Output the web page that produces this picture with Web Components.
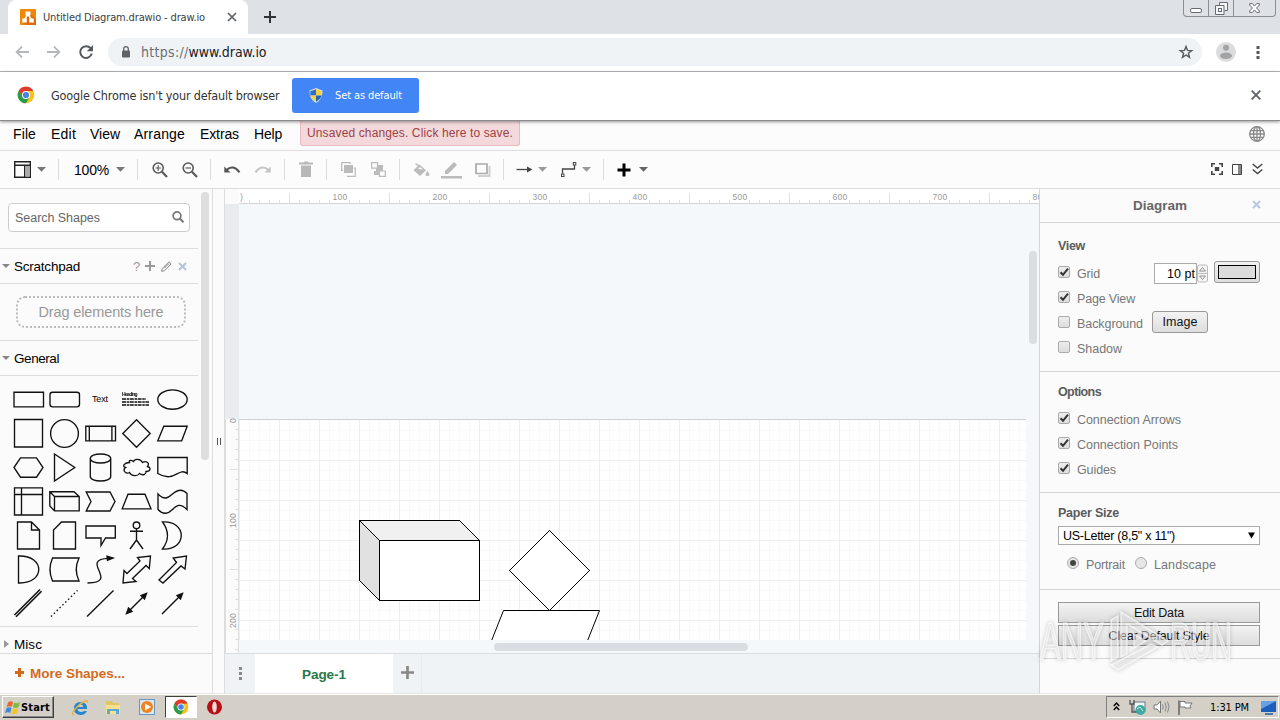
<!DOCTYPE html>
<html lang="en">
<head>
<meta charset="utf-8">
<title>Untitled Diagram.drawio - draw.io</title>
<style>
html,body{margin:0;width:1280px;height:720px;overflow:hidden;background:#fff;font-family:"Liberation Sans",Arial,sans-serif}
</style>
</head>
<body>
<desktop-screen></desktop-screen>
<script>
const define = (name, css, html, init) => customElements.define(name, class extends HTMLElement {
  connectedCallback() {
    if (this.shadowRoot) return;
    const root = this.attachShadow({ mode: 'open' });
    root.innerHTML = `<style>*{box-sizing:border-box}${css}</style>` + (typeof html === 'function' ? html(this) : html);
    if (init) init(this, root);
  }
});

/* Text whose tracking is adjusted to a given width. */
define('fit-text', ':host{display:inline-block;white-space:pre;flex:none}', '<slot></slot>', el => {
  const w = +el.getAttribute('w');
  const nat = el.getBoundingClientRect().width, n = el.textContent.length;
  if (w && nat) { el.style.letterSpacing = ((w - nat) / n).toFixed(3) + 'px'; }
});

const svg = (w, h, body, extra = '') => `<svg width="${w}" height="${h}" viewBox="0 0 ${w} ${h}" fill="none" ${extra}>${body}</svg>`;
/* Lays items [x, width, html] along a row by their gaps. */
const row = items => { let end = 0; return items.map(([x, w, h]) => { const m = x - end; end = x + w; return `<div class="i" style="margin-left:${m}px;width:${w}px">${h}</div>`; }).join(''); };
const rowCss = '.i{flex:none;display:flex;align-items:center;height:100%}svg{display:block;flex:none;overflow:visible}';
const chromeLogo = s => `<svg width="${s}" height="${s}" viewBox="-9 -9 18 18"><circle r="8.3" fill="#fbc116"/><path d="M0 0-7.2-4.15A8.3 8.3 0 0 1 7.2-4.15L0-4Z" fill="#de3b2f"/><path d="M0-4H7.2A8.3 8.3 0 0 0-7.2-4.15L-3.5 2Z" fill="#de3b2f"/><path d="M-7.2-4.15A8.3 8.3 0 0 0 0 8.3L3.6 2 0 4-3.5 2Z" fill="#2a9a4b"/><circle r="4" fill="#fff"/><circle r="3.1" fill="#4383e8"/></svg>`;

define('browser-tabs', `:host{display:flex;height:34px;background:#dee1e6;font-family:"DejaVu Sans Condensed","Noto Sans",sans-serif}
.tab{width:240px;margin-left:8px;background:#fff;border-radius:8px 8px 0 0;display:flex;align-items:center;font-size:11px;color:#3c4043}
.win{margin-left:auto;margin-right:4px;display:flex;width:93px;height:17px;border:1px solid #8b8e96;border-top:0;border-radius:0 0 4px 4px}
.win div{border-right:1px solid #8b8e96;display:flex;justify-content:center;align-items:center}.win div:last-child{border:0}` + rowCss,
`<div class="tab">${row([
 [12,16,svg(16,16,'<rect width="16" height="16" rx="1" fill="#f08705"/><path d="M8 3 16 10V16H6L3 13Z" fill="#df6c0c"/><path d="M8 5 4.500 11M8 5l3.500 6" stroke="#fff" stroke-width="1.500"/><path d="M5.500 2.500h5v4h-5zM2.200 9.500h4.600v4H2.200zM9.200 9.500h4.600v4H9.200z" fill="#fff"/>')],
 [35,163,'<fit-text w="162">Untitled Diagram.drawio - draw.io</fit-text>'],
 [220,8,svg(8,8,'<path d="M0 0 8 8M8 0 0 8" stroke="#5f6368" stroke-width="1.700"/>')]])}</div>
<div class="i" style="margin-left:16px">${svg(12,12,'<path d="M6 0V12M0 6H12" stroke="#303338" stroke-width="2"/>')}</div>
<div class="win"><div style="width:25px">${svg(12,5,'<rect x=".5" y=".5" width="11" height="4" rx="1.500" stroke="#666a75" fill="#fff"/>','style="margin-top:4px"')}</div><div style="width:25px">${svg(13,13,'<path d="M4.500 3.500v-3h8v8h-3M.5 3.500h8.500v9H.5z" stroke="#666a75" fill="#f5f6f8"/><rect x="3.500" y="6.500" width="3" height="3" stroke="#666a75"/>')}</div><div style="flex:1">${svg(11,10,'<path d="M.7.600h2.700l2.100 2.500L7.600.6h2.700v1.500L7.500 5l2.800 2.900v1.500H7.600L5.500 6.900 3.400 9.400H.7V7.900L3.500 5 .7 2.100z" stroke="#666a75" fill="#fff"/>')}</div></div>`);

define('address-bar', `:host{display:flex;height:38px;background:#fff;border-bottom:1px solid #b4b6b8;align-items:center;position:relative}
.omni{margin-left:15px;width:1094px;height:28px;border-radius:14px;background:#f0f3f5;display:flex;align-items:center;font:14px "DejaVu Sans Condensed","Noto Sans",sans-serif;color:#202124;margin-top:-2px}
.nav{display:flex;height:34px;align-items:center;padding-bottom:1px}` + rowCss,
`<div class="nav">${row([
 [15,14,svg(14,12,'<path d="M14 6H1.500M7 .7 1.600 6 7 11.300" stroke="#b5b8bb" stroke-width="1.800"/>')],
 [47,14,svg(14,12,'<path d="M0 6H12.500M7 .7 12.400 6 7 11.300" stroke="#b5b8bb" stroke-width="1.800"/>')],
 [79,14,svg(14,14,'<path d="M11.600 3.200A5.900 5.900 0 1 0 12.800 8.600" stroke="#55585c" stroke-width="2"/><path d="M14 0V6.200H7.800Z" fill="#55585c"/>')]])}</div>
<div class="omni">${row([[14,8,svg(8,12,'<path d="M1.700 5V3a2.300 2.300 0 0 1 4.600 0V5" stroke="#5f6368" stroke-width="1.300"/><rect y="4.500" width="8" height="7" rx="1" fill="#5f6368"/>')],
 [33,126,'<fit-text w="47.500" style="color:#6c7074">https://</fit-text><fit-text w="78">www.draw.io</fit-text>'],
 [1071,14,svg(14,14,'<path d="M7 1.500 8.500 5.400 12.700 5.600 9.400 8.200 10.500 12.300 7 10 3.500 12.300 4.600 8.200 1.300 5.600 5.500 5.400Z" stroke="#55585c" stroke-width="1.400"/>')]])}</div>
<div class="nav">${row([[14,20,svg(20,20,'<circle cx="10" cy="10" r="10" fill="#dcdcdc"/><circle cx="10" cy="5.800" r="3" fill="#a1a3a5"/><ellipse cx="10" cy="13.700" rx="6" ry="3.200" fill="#a1a3a5"/>')],
 [54,4,svg(4,13,'<path d="M.5 0h3v3h-3zM.5 5h3v3h-3zM.5 10h3v3h-3z" fill="#55585c"/>')]])}</div>`);

define('default-notice', `:host{display:flex;height:49px;padding-bottom:2px;background:#fff;border-bottom:1px solid #8b8b8d;align-items:center;font:12.5px "DejaVu Sans Condensed","Noto Sans",sans-serif;color:#333;position:relative;z-index:2;box-shadow:0 1px 3px #0006}
.b{width:127px;height:35px;background:#4285f4;border-radius:3px;color:#fff;font-size:11px;display:flex;align-items:center}` + rowCss,
row([[17,18,chromeLogo(18)],[51,229,'<fit-text w="228.500">Google Chrome isn\'t your default browser</fit-text>'],
 [292,127,`<div class="b">${row([[17,14,svg(14,15,'<path d="M7 0 13.500 2.500Q14 11 7 15 0 11 .5 2.500Z" fill="#d9dde8"/><path d="M7 1.300V7.500H1.300V3.300Z" fill="#2d6fd0"/><path d="M7 1.300V7.500H12.700V3.300Z" fill="#f7d33b"/><path d="M1.400 7.500H7V13.800Q2 11 1.400 7.500" fill="#f7d33b"/><path d="M12.600 7.500H7V13.800Q12 11 12.600 7.500" fill="#2465bd"/>')],[43,68,'<fit-text w="67">Set as default</fit-text>']])}</div>`],
 [1251,10,svg(10,10,'<path d="M.7.700 9.300 9.300M9.300.7.700 9.300" stroke="#5f6368" stroke-width="1.900"/>')]]));

define('menu-bar', `:host{display:flex;height:30px;background:#fcfcfc;border-bottom:1px solid #ddd;font-size:14px;color:#000}
.i{padding-bottom:4px}.w{height:25px;align-self:flex-start;width:220px;border:1px solid #e6bcc0;border-top:0;border-radius:0 0 3px 3px;background:#f3d9db;color:#9c3f46;font-size:12px;display:flex;align-items:center;justify-content:center}` + rowCss,
row([[13,23,'<fit-text w="23">File</fit-text>'],[51,25,'<fit-text w="25">Edit</fit-text>'],[90,30,'<fit-text w="30">View</fit-text>'],[134,51,'<fit-text w="51">Arrange</fit-text>'],[200,40,'<fit-text w="39">Extras</fit-text>'],[254,28,'<fit-text w="28">Help</fit-text>'],
[300,220,'<div class="w"><fit-text w="206">Unsaved changes. Click here to save.</fit-text></div>'],
[1249,16,svg(16,16,'<g stroke="#888" stroke-width="1.300"><circle cx="8" cy="8" r="7.300"/><ellipse cx="8" cy="8" rx="3.500" ry="7.300"/><path d="M8 .7V15.300M.7 8H15.300M1.700 4.700H14.300M1.700 11.300H14.300"/></g>')]]));

const caret = c => svg(9,5,`<path d="M0 0H9L4.500 4.800Z" fill="${c||'#777'}"/>`);
const sep = '<div style="width:1px;height:21px;background:#dcdcdc"></div>';
const lens = plus => svg(16,16,`<g stroke="#5a5a5a"><circle cx="6.200" cy="6" r="5" stroke-width="1.600"/><path d="M10 9.800 15 15" stroke-width="2.200"/><path d="M3.500 6H9${plus?'M6.200 3.300V8.700':''}" stroke-width="1.200"/></g>`);
define('tool-bar', `:host{display:flex;height:38px;background:#fcfcfc;border-bottom:1px solid #ddd;font-size:14px;color:#000}` + rowCss,
row([[14,17,svg(17,17,'<path d="M.7.700H16.300V16.300H.7ZM.7 4.300H16.300M10.700 4.300V16" stroke="#222" stroke-width="1.400"/><path d="M11.500 5h4v10.500h-4z" fill="#aaa"/>')],
[36.5,9,caret()],[58,1,sep],[74,35,'<fit-text w="35">100%</fit-text>'],[115.5,9,caret()],[137,1,sep],
[152,16,lens(1)],[182,16,lens(0)],[210,1,sep],
[224,16,svg(16,7,'<path d="M2.500 4Q9-2 15.500 6.300" stroke="#555" stroke-width="2"/><path d="M.3.500V6.500H6.500Z" fill="#555"/>')],
[255,16,svg(16,7,'<path d="M13.500 4Q7-2 .5 6.300" stroke="#c5c5c5" stroke-width="2"/><path d="M15.700.500V6.500H9.500Z" fill="#c5c5c5"/>')],[284,1,sep],
[299,14,svg(14,16,'<path d="M0 1.500H4.500L5.500.5h3l1 1H14V3.500H0ZM2 4.500H12V16H2Z" fill="#b8b8b8"/>','style="margin-top:-2px"')],[326,1,sep],
[341,15,svg(15,15,'<path d="M2 8.500H.7V.7H9V2M6 14.300h8.300V6H12.500" stroke="#bbb" stroke-width="1.200"/><path d="M3 3h9v8H3z" fill="#bbb"/>')],
[371,15,svg(15,15,'<path d="M5 3h7v7H5zM3 9h5v4H3z" fill="#bbb"/><path d="M.6.600h6v5.600h-6zM8.400 9h6v5.400h-6z" fill="#fcfcfc" stroke="#bbb" stroke-width="1.200"/>')],[399,1,sep],
[413,17,svg(17,15,'<path d="M2.500 1.500 7 5" stroke="#bbb" stroke-width="1.500"/><path d="M6.500 2.500 13 8.300 7 14 .5 8.300Z" fill="#bbb"/><path d="M5 7 7 5l3 2.500z" fill="#fcfcfc"/><path d="M14.500 9q4 5 0 5t0-5" fill="#bbb"/>')],
[441,21,svg(21,18,'<path d="M4 13V10L13 1 16 4 7 13Z" fill="#bbb"/><path d="M0 15H21V17.500H0Z" fill="#bbb"/>')],
[475,15,svg(15,14,'<path d="M1 1H12V10.500H1Z" stroke="#aaa" stroke-width="1.700"/><path d="M3 13H14.500V3" stroke="#d0d0d0" stroke-width="2"/>')],[503,1,sep],
[516,17,svg(17,7,'<path d="M.5 3.500H12" stroke="#444" stroke-width="1.300"/><path d="M11 .5 16.500 3.500 11 6.500Z" fill="#444"/>')],[537.5,9,caret('#999')],
[561,16,svg(16,15,'<path d="M1.500 11.500V7H13.500V3" stroke="#444" stroke-width="1.300"/><rect x=".5" y="12" width="2.500" height="2.500" stroke="#444"/><rect x="12.300" y=".5" width="2.500" height="2.500" stroke="#444"/>')],[581.5,9,caret('#999')],[603,1,sep],
[617,14,svg(14,14,'<path d="M7 .5V13.500M.5 7H13.500" stroke="#000" stroke-width="3"/>')],[638.5,9,caret('#666')],
[1211,12,svg(12,12,'<path d="M.8 4V.8H4M8 .8H11.200V4M11.200 8V11.200H8M4 11.200H.8V8" stroke="#444" stroke-width="1.600"/><path d="M3.800 4h4.400v4H3.800z" fill="#444"/>','style="margin-top:-1px"')],
[1232,10,svg(10,11,'<path d="M.5.500h9v10h-9z" stroke="#444"/><path d="M6 1h3v9H6z" fill="#888"/>','style="margin-top:-1px"')],
[1252,11,svg(11,12,'<path d="M.7 1 5.500 5 10.300 1M.7 6.500 5.500 10.500 10.300 6.500" stroke="#444" stroke-width="1.400"/>','style="margin-top:-1px"')]]));

/* Palette glyphs, each drawn around the centre of its cell. */
const glyphs = [
'<path d="M-14.500-7.300h29.500v14.600h-29.500z"/>','<rect x="-14.500" y="-7.300" width="29.500" height="14.600" rx="2.500"/>','','',
'<ellipse rx="14.700" ry="9.700"/>',
'<path d="M-14-14H14V13.500H-14z"/>','<circle r="13.900"/>','<path d="M-14.700-7.300h29.700v14.600h-29.700zM-11.200-7.300v14.600M11.400-7.300v14.600"/>','<path d="M0-13.700 13.700 0 0 13.700-13.700 0Z"/>','<path d="M-8.700-7.300H14.700L9.200 7.300H-14.700Z"/>',
'<path d="M-14.500 0-8-9.700H8L14.500 0 8 9.700H-8Z"/>','<path d="M-10-13.500 10.300 0-10 13.500Z"/>','<path d="M-10.200-9V9C-10.200 15 10.200 15 10.200 9V-9C10.200-15-10.200-15-10.200-9ZM-10.200-9C-10.200-3 10.200-3 10.200-9"/>','<path d="M-7-5C-12-5-15-1-11 0-15 3-10 7-7 5-5 9 1 9 3 6 7 9 10 6 9.500 4 14 4 15 0 11-1 14-5 9-7 6-5 4-9-2-9-3-6-6-8-8-7-7-5Z"/>','<path d="M-14.700 6V-10H14.700V6C6-1 2 16-14.700 6Z"/>',
'<path d="M-14-13.700H14V13.500H-14zM-7-13.700V13.500M-14-7H14"/>','<path d="M-14.700-9.800H9.500L14.700-5V9.300H-10L-14.700 4.500ZM-14.700-9.800-10-5V9.300M-10-5H14.700"/>','<path d="M-14.300-9.500H9.500L14.500 0 9.500 9.500H-14.300L-9.500 0Z"/>','<path d="M-8.500-7.300H8.500L14.500 7.300H-14.300Z"/>','<path d="M-14.500-7.500C-7.500-.5-4-4 0-7.500S9-14 14.500-8V8C7.500 1 4 4 0 8S-9 14-14.500 8Z"/>',
'<path d="M-11-13.500H3L11-5.500V13.500H-11ZM3-13.500V-5.500H11"/>','<path d="M-3-13.500H11V13.500H-11V-5.500Z"/>','<path d="M-14.500-9.500H14.800V2.500H5L.5 10V2.500H-14.500Z"/>','<circle cy="-10.200" r="3.300"/><path d="M0-7V4.500M-6.500-4.300H6.500M-6.500 13.500 0 4.500 6.500 13.500"/>','<path d="M-10-13.500C15-15 15 15-10 13.500Q0 0-10-13.500Z"/>',
'<path d="M-10-13.500C17-14.500 17 14.500-10 13.500Z"/>','<path d="M-12-11.500H14.500Q9 0 14.500 11.500H-12Q-17 0-12-11.500Z"/>','<path d="M-13 13.500C20 13-22-10 8-11.200"/><path d="M6.500-13.300 12.500-11.500 7-9.300Z" fill="#111"/>','<path d="M-13.500 13.500-12.500 1-9.500 4 3.500-8.500 1-12 14-13.500 12.800-1 9.500-4-4 9-.500 12Z"/>','<path d="M-13.500 10.500 4-7 .7-11.500 14-13.500 12.500-.500 8.500-3.500-9.500 13.500Z"/>',
'<path d="M-14 11.500 11.500-14M-12.500 13.300 13-12.300" stroke-width="1.600"/>','<path d="M-13.500 13 13-13" stroke-dasharray="1.500 2.500"/>','<path d="M-13.500 13 13-13"/>','<path d="M-8 8 8-8"/><path d="M-10 10-8 4.500-4.500 8ZM10-10 8-4.500 4.500-8Z" fill="#111"/>','<path d="M-10.500 10.500 8-8"/><path d="M10-10 8-4.500 4.500-8Z" fill="#111"/>'];
define('shape-palette', ':host{display:grid;grid-template-columns:repeat(5,36px);grid-auto-rows:34px;margin-left:10px}svg,.t{display:block;width:36px;height:34px}svg{stroke:#111;stroke-width:1.35;fill:none}.t{display:flex;align-items:center;justify-content:center;font-size:9px;color:#000}.h{flex-direction:column;align-items:flex-start;justify-content:center;padding-left:4px;font-size:5px;line-height:5px;will-change:transform}.h svg{width:28px;height:8px;margin-top:1px;stroke:#111}',
glyphs.map((g,i)=> i===2?'<div class="t"><fit-text w="16">Text</fit-text></div>': i===3?'<div class="t h"><fit-text w="15" style="font-weight:bold">Heading</fit-text><svg viewBox="0 0 28 8"><path d="M0 1H24M0 4H27M0 7H27" stroke-dasharray="4 .7 2.500 .6"/></svg></div>':`<svg viewBox="-18.500 -17.500 36 34">${g}</svg>`).join(''));

const tri = open => svg(8,8,open?'<path d="M0 2H8L4 6Z" fill="#888"/>':'<path d="M2 0V8L7 4Z" fill="#999"/>');
define('shape-sidebar', `:host{display:flex;flex-direction:column;width:213px;background:#fbfbfb;border-right:1px solid #ddd;position:relative}
.search{margin:14px 0 16px 8px;width:182px;height:29px;border:1px solid #ccc;border-radius:4px;background:#fff;display:flex;align-items:center;font-size:12.5px;color:#666}
.sec{width:198px;height:35px;border-top:1px solid #ddd;display:flex;font-size:13.5px;color:#000}
.line{width:198px;border-top:1px solid #ddd}
.drag{margin:12px 0 12px 16px;width:170px;height:32px;border:2px dotted #bbb;border-radius:9px;display:flex;align-items:center;justify-content:center;font-size:14.500px;color:#999}
.sb{position:absolute;left:201px;top:3px;width:8px;height:268px;border-radius:4px;background:#dedede}
.more{margin-top:auto;height:40px;border-top:1px solid #ddd;display:flex;font-size:13.500px;font-weight:bold;color:#d5691b}` + rowCss,
`<div class="search">${row([[6,86,'<fit-text w="85">Search Shapes</fit-text>'],[163,12,svg(12,12,'<circle cx="5" cy="4.800" r="3.900" stroke="#777" stroke-width="1.700"/><path d="M7.800 7.500 11.500 11.300" stroke="#777" stroke-width="2"/>','style="margin-top:-2px"')]])}</div>
<div class="sec">${row([[2,8,tri(1)],[14,66,'<fit-text w="66">Scratchpad</fit-text>'],[133,7,'<fit-text style="color:#999;font-size:13px">?</fit-text>'],
[145,10,svg(10,10,'<path d="M5 0V10M0 5H10" stroke="#999" stroke-width="2"/>')],[161,11,svg(11,11,'<path d="M.7 10.300 1.300 7.500 8 .8 10.200 3 3.500 9.700ZM3 7.500 8 2.500" stroke="#888"/>')],[178,9,svg(9,9,'<path d="M1 1 8 8M8 1 1 8" stroke="#b5c3d8" stroke-width="2"/>')]])}</div>
<div class="line"></div><div class="drag"><fit-text w="125">Drag elements here</fit-text></div>
<div class="sec">${row([[2,8,tri(1)],[14,46,'<fit-text w="45">General</fit-text>']])}</div><div class="line" style="margin-bottom:6px"></div>
<shape-palette></shape-palette><div class="line" style="margin-top:6px"></div>
<div class="sec" style="border:0;height:26px;padding-top:8px">${row([[2,8,tri(0)],[14,30,'<fit-text w="28">Misc</fit-text>']])}</div>
<div class="more">${row([[15,9,svg(9,9,'<path d="M4.500 0V9M0 4.500H9" stroke="#d5691b" stroke-width="3"/>','style="margin-top:-3px"')],[30,95,'<fit-text w="95">More Shapes...</fit-text>']])}</div><div class="sb"></div>`);

const lines = (n, f) => Array.from({length:n},(_,i)=>f(i)).join('');
define('diagram-canvas', `:host{display:grid;grid-template:15px 1fr 40px/14px 1fr;width:815px;position:relative;background:#f5f8fb;border-right:1px solid #d5d5d5}
svg{display:block}text{font:8.500px "Liberation Sans",sans-serif;fill:#999;letter-spacing:.2px}
.corner{background:#fbfbfb}.v{background:#e8ecef}.h{background:#fff;overflow:hidden}
.view{overflow:hidden;position:relative}.bar{position:absolute;background:#dadee2;border-radius:4px}
.tabs{grid-column:1/3;border-top:1px solid #d9dee2;background:#eff3f6;display:flex;color:#27784a;font-weight:bold;font-size:13.500px}
.d{display:flex;align-items:center;justify-content:center}.p{width:138px;background:#fff;padding-top:1px}` + rowCss,
`<div class="corner"></div>
<div class="h"><svg width="800" height="15"><path d="M0 14.500H800" stroke="#d5d5d5"/><path d="${lines(80,i=>i%10===0?'':`M${i*10+.5} ${i%10===5?4:11}V14`)}" stroke="#e0e0e0"/><text x="1" y="11">)</text>${lines(8,i=>`<text x="${(i+1)*100+1}" y="11" text-anchor="middle">${(i+1)*100}</text>`)}</svg></div>
<div class="v"><svg width="14" height="449"><path d="M0 215H14V449H0z" fill="#fbfbfb"/><path d="M13.500 215V449M.5 215V449" stroke="#ddd"/><path d="${lines(24,i=>i%10===0?'':`M${i%10===5?5:10} ${i*10+215.5}H13`)}" stroke="#e0e0e0"/>${[0,1,2].map(i=>`<text transform="translate(10.500 ${216.5+i*100}) rotate(-90)" text-anchor="middle">${i*100}</text>`).join('')}</svg></div>
<div class="view"><svg width="800" height="449"><path d="M0 215H787V436H0z" fill="#fff"/>
<path d="${lines(79,i=>`M${i*10+.5} 215V436`)}${lines(21,i=>`M0 ${i*10+226.5}H787`)}" stroke="#f8f8f8"/><path d="${lines(20,i=>`M${i*40+.5} 215V436`)}${lines(5,i=>`M0 ${i*40+256.5}H787`)}" stroke="#eee"/><path d="M0 215.500H787" stroke="#d0d0d0"/>
<g stroke="#000" shape-rendering="crispEdges"><path d="M120.500 316.500H220.500L240.500 336.500V396.500H140.500L120.500 376.500Z" fill="#f0f0f0"/><path d="M120.500 316.500 140.500 336.500V396.500L120.500 376.500Z" fill="#e1e1e1"/><path d="M140.500 336.500H240.500V396.500H140.500Z" fill="#fff"/><path d="M310.500 326.500 350.500 366.500 310.500 406.500 270.500 366.500Z" fill="#fff"/></g><path d="M252.800 436 264.500 406.500H360.500L348.800 436" stroke="#000" fill="#fff"/></svg></div>
<div class="tabs"><div class="d" style="width:30px">${svg(3,13,'<path d="M0 0h3v3H0zM0 5h3v3H0zM0 10h3v3H0z" fill="#888"/>')}</div><div class="d p"><fit-text w="44">Page-1</fit-text></div><div class="d" style="width:29px;border-right:1px solid #e7ecef;padding-bottom:3px">${svg(13,13,'<path d="M6.500 0V13M0 6.500H13" stroke="#888" stroke-width="2.700"/>')}</div></div>
<div class="bar" style="left:804px;top:62px;width:8px;height:93px"></div><div class="bar" style="left:269px;top:454px;width:254px;height:8px"></div>`);

define('check-row', `:host{display:flex;align-items:center;height:25px;font-size:12.500px;color:#777}.c{width:12px;height:12px;border:1px solid #aaa;border-radius:2px;background:linear-gradient(#eee,#ddd);margin:-4px 7px 0 0;flex:none}svg{display:block}`,
el => `<div class="c">${el.hasAttribute('on')?svg(10,10,'<path d="M1.500 5.200 4 7.800 9 1.700" stroke="#333" stroke-width="2"/>'):''}</div><slot></slot>`);
define('push-button', ':host{display:flex;align-items:center;justify-content:center;border:1px solid #999;border-radius:3px;background:linear-gradient(#f3f3f3,#ddd);font-size:12.500px;color:#111;box-sizing:border-box}:host([flat]){border-radius:0;height:21px;width:202px}','<slot></slot>');
define('format-panel', `:host{display:block;flex:1;background:#fbfbfb;color:#777;font-size:12.500px}
header{height:34px;border-bottom:1px solid #d5d5d5;display:flex;font-weight:bold;font-size:13.500px;color:#666}
section{border-bottom:1px solid #d5d5d5;padding-left:18px}h4{margin:0 0 6px;height:20px;padding-top:1px;display:flex;align-items:center;font-size:12.500px;color:#5c5c5c}
.r{display:flex;height:25px;align-items:center}.r check-row{width:94px}
.num{margin-left:2px;width:43px;height:21px;border:1px solid #aaa;background:#fff;color:#000;display:flex;align-items:center;justify-content:flex-end;padding-right:1px;font-size:12.500px}
.sel{width:202px;height:19px;border:1px solid #aaa;background:#fff;color:#000;display:flex;align-items:center;justify-content:space-between;padding:0 4px}
.rd{width:12px;height:12px;border:1px solid #aaa;border-radius:50%;background:#e6e6e6;margin-top:-4px;display:flex;align-items:center;justify-content:center}.rd i{width:6px;height:6px;border-radius:50%;background:#444}` + rowCss,
`<header>${row([[93,54,'<fit-text w="54">Diagram</fit-text>'],[212,9,svg(9,9,'<path d="M1 1 8 8M8 1 1 8" stroke="#b5c9e3" stroke-width="2"/>','style="margin-top:-2px"')]])}</header>
<section style="height:149px;padding-top:12px"><h4><fit-text w="27">View</fit-text></h4>
<div class="r"><check-row on><fit-text w="23">Grid</fit-text></check-row><div class="num"><fit-text w="28">10 pt</fit-text></div>${svg(11,19,'<rect x=".5" y="1" width="10" height="17" rx="2" fill="#f5f5f5" stroke="#bbb"/><path d="M.5 9.500H10.500" stroke="#bbb"/><path d="M2.500 7H8.500L5.500 3.500ZM2.500 12H8.500L5.500 15.500Z" stroke="#777" stroke-width=".8"/>')}<push-button style="width:46px;height:22px;margin:-3px 0 0 6px"><svg width="38" height="14"><rect x=".5" y=".5" width="37" height="13" fill="#dcdcdc" stroke="#000"/></svg></push-button></div>
<div class="r"><check-row on><fit-text w="58">Page View</fit-text></check-row></div>
<div class="r"><check-row><fit-text w="66">Background</fit-text></check-row><push-button style="width:56px;height:22px;margin-top:-3px"><fit-text w="35">Image</fit-text></push-button></div>
<div class="r"><check-row><fit-text w="45">Shadow</fit-text></check-row></div></section>
<section style="height:121px;padding-top:9px"><h4><fit-text w="43">Options</fit-text></h4>
<check-row on><fit-text w="104">Connection Arrows</fit-text></check-row><check-row on><fit-text w="101">Connection Points</fit-text></check-row><check-row on><fit-text w="39">Guides</fit-text></check-row></section>
<section style="height:97px;padding-top:9px"><h4 style="margin-bottom:4px"><fit-text w="61">Paper Size</fit-text></h4>
<div class="sel"><fit-text w="112">US-Letter (8,5" x 11")</fit-text>${svg(7,7,'<path d="M0 .5H7L3.500 6.500Z" fill="#000"/>')}</div>
<div class="r" style="margin-top:7px">${row([[9,12,'<div class="rd"><i></i></div>'],[28,40,'<fit-text w="39">Portrait</fit-text>'],[77,12,'<div class="rd"></div>'],[96,62,'<fit-text w="62">Landscape</fit-text>']])}</div></section>
<section style="height:69px;padding-top:12px;display:flex;flex-direction:column;gap:2px"><push-button flat><fit-text w="50">Edit Data</fit-text></push-button><push-button flat><fit-text w="101">Clear Default Style</fit-text></push-button></section>`);

define('task-bar', `:host{display:flex;height:27px;background:#d4d0c8;border-top:1px solid #e8e6e1;box-shadow:inset 0 1px #fff;align-items:center;font-family:"DejaVu Sans Condensed","Noto Sans",sans-serif;color:#000;box-sizing:border-box}
.start{width:52px;height:22px;border:1px solid;border-color:#fff #404040 #404040 #fff;box-shadow:inset -1px -1px #888;display:flex;align-items:center;font-weight:bold;font-size:11px;padding-left:2px;gap:1px}
.on{width:32px;height:22px;border:1px solid;border-color:#404040 #fff #fff #404040;background:#fff;display:flex;align-items:center;justify-content:center}
.tray{width:173px;height:22px;border:1px solid;border-color:#808080 #fff #fff #808080;display:flex;font-size:11px}` + rowCss,
row([[2,52,`<div class="start">${svg(15,15,'<path d="M3 2.500Q5.500.5 8 2L6.800 6.800Q4 5.500 1.500 7.500Z" fill="#e8692b"/><path d="M9 2.500q3 1.500 6-.5L13.500 7q-3 2-5.500.3Z" fill="#7fba42"/><path d="M1.300 8.500q2.500-2 5.200-.7L5.200 13Q2.500 11.500 0 13.500Z" fill="#4189d6"/><path d="M7.700 8.300q2.500 1.500 5.500-.3L12 13q-3 2-5.700.5Z" fill="#f4c52e"/>')}<fit-text w="29">Start</fit-text></div>`],
[72,17,svg(17,17,'<path d="M14 10H5.500Q6 13 9 13 11.500 13 12 12H15Q13 16 8.700 16 2 16 2 9.500 2 3 8.500 3 15.500 3 15 10ZM5.500 8H11.500Q11 5.500 8.500 5.500 6 5.500 5.500 8Z" fill="#2685cf"/><path d="M2 16Q-2 15 5 8 16-2 15.500 4" stroke="#e7b73c" stroke-width="1.500"/>')],
[105,16,svg(16,15,'<path d="M1 1H7L8 3H14V13H1Z" fill="#e3c362"/><path d="M1 5H15V14H1Z" fill="#f6e18e"/><path d="M2 14V9H14V14H11V11H5V14Z" fill="#5ca9d8"/>')],
[139,16,svg(16,16,'<rect x=".5" y=".5" width="15" height="15" fill="#d9e7f2" stroke="#6898c2"/><circle cx="8" cy="8" r="6" fill="#ee8420"/><path d="M6 4.500 12 8 6 11.500Z" fill="#fff"/>')],
[165,32,`<div class="on">${chromeLogo(16)}</div>`],
[207,15,svg(15,16,'<circle cx="7.500" cy="8" r="7.500" fill="#b90f17"/><ellipse cx="7.500" cy="8" rx="2.300" ry="5.500" fill="#eedcda"/>')],
[1106,173,`<div class="tray">${row([[6,7,svg(7,9,'<path d="M.8 4 3.500 1 6.200 4M.8 8 3.500 5 6.200 8" stroke="#000" stroke-width="1.400"/>','style="margin-top:-2px"')],
[22,17,svg(17,16,'<rect x="5" y="3" width="11" height="9" fill="#eef5f5" stroke="#678"/><path d="M1 1V5H5V1M3 5V13H8" stroke="#555" stroke-width="1.300"/><circle cx="11.500" cy="11" r="5" fill="#41a9a0"/><path d="M8 10 11 8 14 12" stroke="#c3eee2"/>')],
[46,17,svg(17,14,'<path d="M1 5H4L7.500 1V13L4 9H1Z" fill="#fff" stroke="#777"/><path d="M9.500 4.500Q11 7 9.500 9.500M12 2.500Q14.500 7 12 11.500M14.500 1.500Q17.500 7 14.500 12.500" stroke="#888"/>')],
[70,16,svg(16,15,'<path d="M2 15V.5" stroke="#666" stroke-width="1.500"/><path d="M3 1.500H8V3H15L13 6 14 8H8V7H3Z" fill="#fff" stroke="#777"/>')],
[103,40,'<fit-text w="39">1:31 PM</fit-text>'],
[153,17,svg(17,15,'<path d="M1 1H16V12H1Z" fill="#1e5fbd"/><path d="M1 1H16L1 9Z" fill="#65a3e6"/><path d="M5 14H13" stroke="#4c78aa" stroke-width="2"/>')]])}</div>`]]));

define('water-mark', ':host{display:block;position:absolute;left:1036px;top:602px;width:204px;height:80px;pointer-events:none;z-index:5}svg{display:block;filter:drop-shadow(0 0 2px #0005)}text{font:51px "Liberation Sans",sans-serif}',
'<svg width="204" height="80"><g fill="#fff" fill-opacity=".45" stroke="#fff" stroke-opacity=".6" stroke-width="1.500"><text x="4" y="57" textLength="64" lengthAdjust="spacingAndGlyphs">ANY</text><text x="134" y="57" textLength="62" lengthAdjust="spacingAndGlyphs">RUN</text><path d="M75 18 82 14V55L75 59ZM85 10 132 39 126 43 91 22V52L85 55ZM75 63 115 42 122 45 82 68ZM98 32 110 39 98 46Z"/></g></svg>');

define('desktop-screen', `:host{display:flex;flex-direction:column;width:1280px;height:720px;position:relative;overflow:hidden}:host>*,*{flex-shrink:0}address-bar,default-notice,menu-bar,tool-bar{box-sizing:border-box}
format-panel{flex-shrink:1}main{display:flex;height:504px}.split{width:12px;background:#fbfbfb;border-right:1px solid #ddd;display:flex;align-items:center;justify-content:center}.split i{width:4px;height:7px;border:solid #555;border-width:0 1px}`,
`<browser-tabs></browser-tabs><address-bar></address-bar><default-notice></default-notice><menu-bar></menu-bar><tool-bar></tool-bar>
<main><shape-sidebar></shape-sidebar><div class="split"><i></i></div><diagram-canvas></diagram-canvas><format-panel></format-panel></main><task-bar></task-bar><water-mark></water-mark>`);
</script>
</body>
</html>
